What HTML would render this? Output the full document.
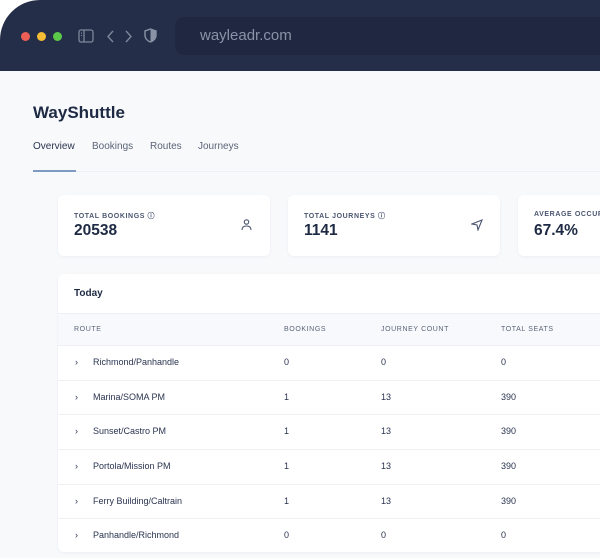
<!DOCTYPE html>
<html><head><style>
*{margin:0;padding:0;box-sizing:border-box}
html,body{width:600px;height:558px;overflow:hidden}
body{background:#fff;font-family:"Liberation Sans",sans-serif;position:relative}
.win{position:absolute;left:0;top:0;width:640px;height:558px;border-top-left-radius:40px;overflow:hidden;background:#f7f9fb}
.bar{position:absolute;left:0;top:0;width:100%;height:71px;background:#252e48}
.dot{position:absolute;top:32px;width:9px;height:9px;border-radius:50%}
.url{position:absolute;left:175px;top:17px;width:440px;height:38px;background:#1f2741;border-radius:9px;color:#8b93a7;font-size:15px;line-height:38px;padding-left:25px}
.abs{position:absolute}
.card{position:absolute;background:#fff;border-radius:6px;box-shadow:0 1px 3px rgba(30,40,70,.05)}
.lbl{font-size:7px;letter-spacing:.6px;color:#4a5570;font-weight:bold}
.val{font-size:15.5px;font-weight:bold;color:#1e2a44}
.row{position:absolute;left:0;width:600px;height:35px;border-top:1px solid #eef0f4;font-size:9px;color:#2a3450}
.row span{position:absolute;top:11px}
</style></head><body>
<div class="win">
<div class="bar">
<div class="dot" style="left:21px;background:#ec5f57"></div>
<div class="dot" style="left:37px;background:#f5bd36"></div>
<div class="dot" style="left:53px;background:#5cc84a"></div>
<svg class="abs" style="left:78px;top:29px" width="16" height="14" viewBox="0 0 16 14" fill="none" stroke="#7d869b" stroke-width="1.3"><rect x="1" y="1" width="14" height="12" rx="2"/><line x1="6" y1="1" x2="6" y2="13"/><line x1="3" y1="4" x2="4" y2="4"/><line x1="3" y1="6.5" x2="4" y2="6.5"/></svg>
<svg class="abs" style="left:107px;top:30px" width="26" height="13" viewBox="0 0 26 13" fill="none" stroke="#7d869b" stroke-width="1.4"><path d="M6 1 L1 6.5 L6 12"/><path d="M19 1 L24 6.5 L19 12"/></svg>
<svg class="abs" style="left:144px;top:28px" width="13" height="15" viewBox="0 0 13 15"><path d="M6.5 1 L12 3 V7 C12 10.5 9.5 13 6.5 14 C3.5 13 1 10.5 1 7 V3 Z" fill="none" stroke="#8a93a6" stroke-width="1.4"/><path d="M6.5 1 L12 3 V7 C12 10.5 9.5 13 6.5 14 Z" fill="#8a93a6"/></svg>
<div class="url">wayleadr.com</div>
</div>
<div class="abs" style="left:33px;top:103px;font-size:17px;font-weight:bold;color:#1e2a44">WayShuttle</div>
<div class="abs" style="left:33px;top:141px;font-size:10px;color:#2a3450">Overview</div>
<div class="abs" style="left:92px;top:141px;font-size:10px;color:#5b6478">Bookings</div>
<div class="abs" style="left:150px;top:141px;font-size:10px;color:#5b6478">Routes</div>
<div class="abs" style="left:198px;top:141px;font-size:10px;color:#5b6478">Journeys</div>
<div class="abs" style="left:33px;top:171px;width:600px;height:1px;background:#edf0f4"></div>
<div class="abs" style="left:33px;top:170px;width:43px;height:2px;background:#7f9bc4"></div>

<div class="card" style="left:58px;top:195px;width:212px;height:61px">
<div class="abs lbl" style="left:16px;top:16px">TOTAL BOOKINGS ⓘ</div>
<div class="abs val" style="left:16px;top:27px">20538</div>
<svg class="abs" style="left:183px;top:24px" width="11" height="12" viewBox="0 0 11 12" fill="none" stroke="#4a5570" stroke-width="1.1"><circle cx="5.5" cy="3" r="2.2"/><path d="M1 11 C1 8 3 7 5.5 7 C8 7 10 8 10 11"/></svg>
</div>
<div class="card" style="left:288px;top:195px;width:212px;height:61px">
<div class="abs lbl" style="left:16px;top:16px">TOTAL JOURNEYS ⓘ</div>
<div class="abs val" style="left:16px;top:27px">1141</div>
<svg class="abs" style="left:183px;top:24px" width="12" height="12" viewBox="0 0 12 12" fill="none" stroke="#4a5570" stroke-width="1.1"><path d="M11 1 L1 5 L6 6 L7 11 Z"/></svg>
</div>
<div class="card" style="left:518px;top:195px;width:120px;height:61px">
<div class="abs lbl" style="left:16px;top:16px">AVERAGE OCCUPANCY</div>
<div class="abs val" style="left:16px;top:27px">67.4%</div>
</div>

<div class="card" style="left:58px;top:274px;width:600px;height:278px;overflow:hidden">
<div class="abs" style="left:16px;top:14px;font-size:10px;font-weight:bold;color:#1e2a44">Today</div>
<div class="abs" style="left:0;top:39px;width:600px;height:32px;background:#f8f9fc;border-top:1px solid #eef0f4">
<span class="abs lbl" style="left:16px;top:12px;font-weight:normal;color:#5b6478">ROUTE</span>
<span class="abs lbl" style="left:226px;top:12px;font-weight:normal;color:#5b6478">BOOKINGS</span>
<span class="abs lbl" style="left:323px;top:12px;font-weight:normal;color:#5b6478">JOURNEY COUNT</span>
<span class="abs lbl" style="left:443px;top:12px;font-weight:normal;color:#5b6478">TOTAL SEATS</span>
</div>
<div class="row" style="top:71px"><span style="left:17px">›</span><span style="left:35px">Richmond/Panhandle</span><span style="left:226px">0</span><span style="left:323px">0</span><span style="left:443px">0</span></div>
<div class="row" style="top:106px"><span style="left:17px">›</span><span style="left:35px">Marina/SOMA PM</span><span style="left:226px">1</span><span style="left:323px">13</span><span style="left:443px">390</span></div>
<div class="row" style="top:140px"><span style="left:17px">›</span><span style="left:35px">Sunset/Castro PM</span><span style="left:226px">1</span><span style="left:323px">13</span><span style="left:443px">390</span></div>
<div class="row" style="top:175px"><span style="left:17px">›</span><span style="left:35px">Portola/Mission PM</span><span style="left:226px">1</span><span style="left:323px">13</span><span style="left:443px">390</span></div>
<div class="row" style="top:210px"><span style="left:17px">›</span><span style="left:35px">Ferry Building/Caltrain</span><span style="left:226px">1</span><span style="left:323px">13</span><span style="left:443px">390</span></div>
<div class="row" style="top:244px"><span style="left:17px">›</span><span style="left:35px">Panhandle/Richmond</span><span style="left:226px">0</span><span style="left:323px">0</span><span style="left:443px">0</span></div>
</div>
</div>
</body></html>
